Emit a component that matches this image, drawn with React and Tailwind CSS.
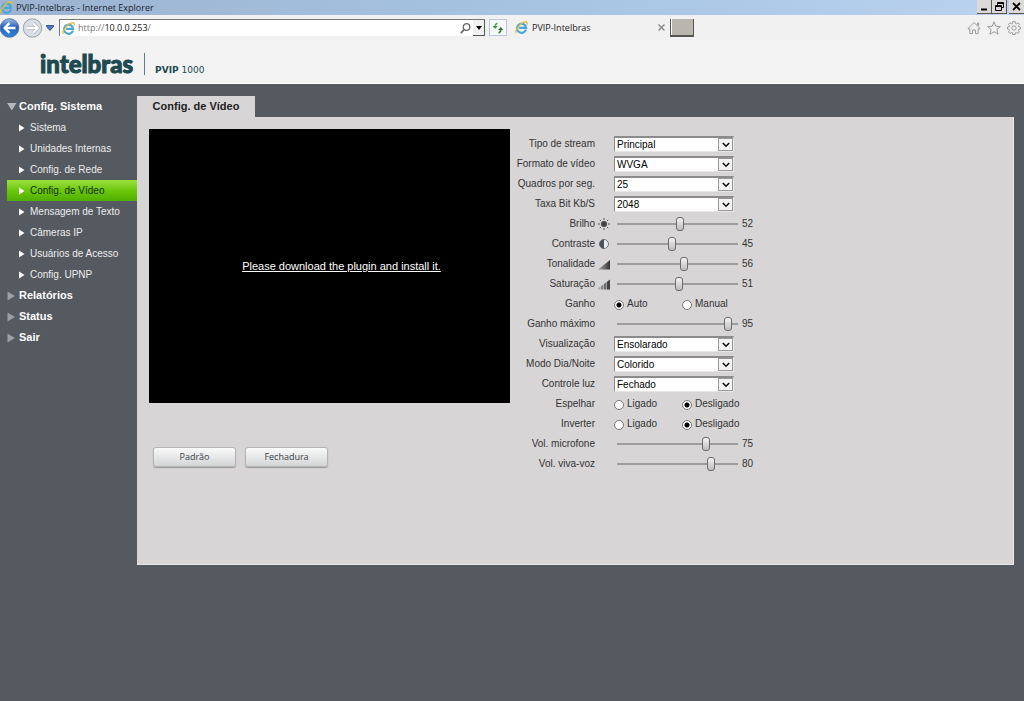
import { useState } from 'react';

const subItems = [
    'Sistema',
    'Unidades Internas',
    'Config. de Rede',
    'Config. de Vídeo',
    'Mensagem de Texto',
    'Câmeras IP',
    'Usuários de Acesso',
    'Config. UPNP',
];

function IeLogo() {
    return (
        <svg width="13" height="13" viewBox="0 0 14 14" fill="none" className="shrink-0">
            <path d="M11.8 9.3A4.9 4.9 0 1 1 12 7.4H4.5" stroke="#4ba6da" strokeWidth="2.3" />
            <path d="M1.4 12.8C-.6 10.8 6 1.400 11 .9c2-.2 2.400 1.300 1.600 3" stroke="#dcc03e" strokeWidth="1.500" />
        </svg>
    );
}

function TitleBar() {
    return (
        <div className="flex h-[15px] items-center justify-between bg-linear-to-r from-[#9cb3d1] via-[#a6c3e2] to-[#b9d2f0]">
            <div className="flex items-center gap-[3px] text-[9px] leading-[14px] text-[#1a2230]">
                <IeLogo />
                <span>PVIP-Intelbras - Internet Explorer</span>
            </div>
            <div className="flex h-[14px] self-start">
                <button aria-label="Minimizar" className="flex w-[15px] items-end justify-center border-r border-b border-[#555] bg-[#dcdad6] pb-[2px]">
                    <svg width="7" height="3"><path d="M0 1.500H6" stroke="#000" strokeWidth="2" /></svg>
                </button>
                <button aria-label="Restaurar" className="mr-[2px] flex w-[15px] items-center justify-center border-r border-b border-[#555] bg-[#dcdad6]">
                    <svg width="9" height="9" fill="none" stroke="#000">
                        <path d="M2.500 3V.5h6v5H7M2.500 1.500h6M.5 3.500h6v5h-6zM.5 4.500h6" />
                    </svg>
                </button>
                <button aria-label="Fechar" className="flex w-[15px] items-center justify-center border-b border-[#555] bg-[#dcdad6]">
                    <svg width="9" height="9"><path d="M1 1l7 7M8 1L1 8" stroke="#000" strokeWidth="1.800" /></svg>
                </button>
            </div>
        </div>
    );
}

function AddressBar() {
    return (
        <div className="flex h-[25px] items-center bg-[#f1f1f1]">
            <button aria-label="Voltar">
                <svg width="20" height="20" viewBox="0 0 20 20" className="block">
                    <defs>
                        <linearGradient id="back" x1="0" y1="0" x2="0" y2="1">
                            <stop offset="0" stopColor="#9dbdea" />
                            <stop offset=".45" stopColor="#2860b8" />
                            <stop offset="1" stopColor="#2b8be0" />
                        </linearGradient>
                    </defs>
                    <circle cx="9.500" cy="10" r="9.300" fill="url(#back)" stroke="#4b6288" strokeWidth=".8" />
                    <path d="M15.500 10H5M9.500 5.200L4.700 10l4.800 4.800" fill="none" stroke="#fff" strokeWidth="2.400" />
                </svg>
            </button>
            <button aria-label="Avançar" className="ml-[3px]">
                <svg width="20" height="20" viewBox="0 0 20 20" className="block">
                    <circle cx="9.500" cy="10" r="9.200" fill="#d9dee5" stroke="#8d97a5" strokeWidth=".9" />
                    <path d="M4 10h10.500M10 5.200l4.800 4.800-4.800 4.800" fill="none" stroke="#aab1ba" strokeWidth="3.200" />
                    <path d="M4 10h10.500M10 5.200l4.800 4.800-4.800 4.800" fill="none" stroke="#fff" strokeWidth="2" />
                </svg>
            </button>
            <button aria-label="Histórico" className="ml-[3px]">
                <svg width="8" height="6" className="block"><path d="M.5.5h7v1L4 5.500.5 1.500z" fill="#4a78c8" stroke="#23407c" strokeWidth=".8" /></svg>
            </button>
            <div className="ml-[5px] flex h-[17px] w-[426px] items-center border-t border-l border-[#777] bg-white pl-[2px]">
                <IeLogo />
                <span className="ml-[3px] flex-1 text-[9px] text-[#777]">
                    http://<span className="text-[#111]">10.0.0.253</span>/
                </span>
                <button aria-label="Pesquisar">
                    <svg width="11" height="11" fill="none" stroke="#666"><circle cx="6.500" cy="4" r="3.300" strokeWidth="1.300" /><path d="M4.200 6.500L.8 10.200" strokeWidth="1.800" /></svg>
                </button>
                <button aria-label="Opções de endereço" className="ml-[2px] flex h-full w-[12px] items-center justify-center border-r border-b border-[#555] bg-[#f1f1f1]">
                    <svg width="6" height="4"><path d="M0 0h6L3 4z" fill="#000" /></svg>
                </button>
            </div>
            <button aria-label="Atualizar" className="ml-[4px] flex h-[17px] w-[18px] items-center justify-center border border-[#b9c8de] bg-[#f7f9fb]">
                <svg width="12" height="12" fill="none">
                    <path d="M5.500 1.200Q3.300 1.500 3.300 4.500" stroke="#55a84c" strokeWidth="1.600" />
                    <path d="M.6 4h5.200L3.200 7z" fill="#3d9a3d" />
                    <path d="M6.500 10.800Q8.700 10.500 8.700 7.500" stroke="#2f7d33" strokeWidth="1.600" />
                    <path d="M6.200 8h5.200L8.800 5z" fill="#2a7230" />
                </svg>
            </button>
            <div className="ml-[8px] flex w-[150px] items-center gap-[4px] text-[9px] text-[#222]">
                <IeLogo />
                <span className="flex-1">PVIP-Intelbras</span>
                <button aria-label="Fechar guia">
                    <svg width="7" height="7" className="block"><path d="M.5.5l6 6M6.500.5l-6 6" stroke="#888" strokeWidth="1.400" /></svg>
                </button>
            </div>
            <button aria-label="Nova guia" className="ml-[5px] h-[18px] w-[24px] border-r border-b-2 border-l border-[#555] bg-[#bab6af] shadow-[inset_1px_0_0_#fff]"></button>
            <div className="ml-auto flex items-center gap-[6px] pr-[3px] text-[#9a9a9a]">
                <svg width="14" height="14" fill="none" stroke="currentColor"><path d="M1 7.500L7 1.500l6 6-1 .8-.8-.7v5H8.500V9h-3v3.600H2.800v-5L2 8.300zM10.500 4V2h1.200v3" /></svg>
                <svg width="14" height="14" fill="none" stroke="currentColor"><path d="M7 .8l1.800 4.400 4.700.3-3.600 3 1.200 4.700L7 10.700l-4.100 2.500 1.200-4.700-3.600-3 4.700-.3z" /></svg>
                <svg width="14" height="14" fill="none" stroke="currentColor">
                    <circle cx="7" cy="7" r="2.200" />
                    <path d="M5.800.6h2.400l.3 1.800 1 .4 1.500-1 1.500 1.600-1 1.500.4 1 1.600.3v1.900l-1.700.4-.4 1 1 1.500-1.500 1.500-1.500-1-1 .4-.3 1.600H5.800l-.3-1.600-1-.4-1.500 1L1.500 11l1-1.500-.4-1L.5 8.100V6.200l1.600-.3.4-1-1-1.500L3 1.800l1.500 1 1-.4z" />
                </svg>
            </div>
        </div>
    );
}

function Sidebar() {
    const [active, setActive] = useState('Config. de Vídeo');

    return (
        <nav className="w-[137px] shrink-0 pl-[7px] text-white">
            <a href="#sistema" className="flex h-[21px] items-center gap-[2px] text-[11px] font-bold">
                <svg width="10" height="8"><path d="M0 0h9.500L4.800 7.500z" fill="#b4b6b9" /></svg>
                Config. Sistema
            </a>
            <ul>
                {subItems.map((item) => (
                    <li key={item}>
                        <a
                            href="#item"
                            onClick={() => setActive(item)}
                            className={
                                item === active
                                    ? 'flex h-[21px] items-center gap-[5px] bg-linear-to-b from-[#9be03a] via-[#6cc80a] to-[#4fae00] pl-[12px] text-[10px] text-[#10300a]'
                                    : 'flex h-[21px] items-center gap-[5px] pl-[12px] text-[10px] text-[#eceded]'
                            }
                        >
                            <svg width="6" height="8"><path d="M0 .5L5.500 4 0 7.500z" fill="#fff" /></svg>
                            {item}
                        </a>
                    </li>
                ))}
            </ul>
            {['Relatórios', 'Status', 'Sair'].map((item) => (
                <a key={item} href="#menu" className="flex h-[21px] items-center gap-[4px] text-[11px] font-bold">
                    <svg width="8" height="10"><path d="M.5.5L8 5 .5 9.500z" fill="#9c9fa3" /></svg>
                    {item}
                </a>
            ))}
        </nav>
    );
}

function Row({ id, label, icon, children }) {
    return (
        <div className="flex h-[20px] items-center">
            <label htmlFor={id} className="w-[85px] text-right whitespace-nowrap">{label}</label>
            <span className="flex w-[19px] justify-center pr-[2px]">{icon}</span>
            {children}
        </div>
    );
}

function SelectRow({ id, label, value }) {
    return (
        <Row id={id} label={label}>
            <div className="relative h-[16px] w-[120px]">
                <select id={id} className="block h-full w-full appearance-none border border-t-2 border-[#8b8b8b] border-r-[#e6e6e6] border-b-[#e6e6e6] bg-white pl-[2px] text-[10px] leading-[12px] text-black">
                    <option>{value}</option>
                </select>
                <span className="pointer-events-none absolute top-[2px] right-[1px] bottom-[1px] flex w-[15px] items-center justify-center border border-[#999] bg-[#f3f3f3]">
                    <svg width="8" height="6" fill="none"><path d="M.8 1L4 4.200 7.200 1" stroke="#111" strokeWidth="1.600" /></svg>
                </span>
            </div>
        </Row>
    );
}

function SliderRow({ id, label, icon, initial }) {
    const [value, setValue] = useState(initial);

    return (
        <Row id={id} label={label} icon={icon}>
            <input
                id={id}
                type="range"
                min="0"
                max="100"
                value={value}
                onChange={(e) => setValue(Number(e.target.value))}
                className="ml-[3px] h-[14px] w-[121px] appearance-none bg-transparent [&::-webkit-slider-runnable-track]:h-[2px] [&::-webkit-slider-runnable-track]:bg-[#9c9c9c] [&::-webkit-slider-thumb]:mt-[-6px] [&::-webkit-slider-thumb]:h-[14px] [&::-webkit-slider-thumb]:w-[8px] [&::-webkit-slider-thumb]:appearance-none [&::-webkit-slider-thumb]:rounded-[3px] [&::-webkit-slider-thumb]:border [&::-webkit-slider-thumb]:border-[#6b6b6b] [&::-webkit-slider-thumb]:bg-linear-to-b [&::-webkit-slider-thumb]:from-[#f4f4f4] [&::-webkit-slider-thumb]:to-[#bdbdbd]"
            />
            <span className="ml-[4px]">{value}</span>
        </Row>
    );
}

function RadioRow({ name, label, options, initial }) {
    const [value, setValue] = useState(initial);

    return (
        <div role="radiogroup" aria-label={label} className="flex h-[20px] items-center">
            <span className="w-[85px] text-right">{label}</span>
            <div className="ml-[19px] flex">
                {options.map((option) => (
                    <label key={option} className="flex w-[68px] items-center gap-[3px]">
                        <input
                            type="radio"
                            name={name}
                            checked={value === option}
                            onChange={() => setValue(option)}
                            className="mt-[2px] h-[10px] w-[10px] shrink-0 appearance-none rounded-full border border-[#777] bg-white checked:bg-[radial-gradient(circle,#000_2px,#fff_3px)]"
                        />
                        {option}
                    </label>
                ))}
            </div>
        </div>
    );
}

const sunIcon = (
    <svg width="12" height="12" stroke="#555">
        <circle cx="6" cy="6" r="3" fill="#444" stroke="none" />
        <path d="M6 0v2M6 10v2M0 6h2M10 6h2M1.800 1.800l1.300 1.300M8.900 8.900l1.300 1.300M10.200 1.800L8.900 3.100M3.100 8.900l-1.300 1.300" />
    </svg>
);

const contrastIcon = (
    <svg width="12" height="12">
        <circle cx="6" cy="6" r="4.500" fill="#e8ecf0" stroke="#69727c" />
        <path d="M6 1.500a4.500 4.500 0 0 0 0 9z" fill="#4a525c" />
    </svg>
);

const hueIcon = (
    <svg width="12" height="12">
        <defs>
            <linearGradient id="hue">
                <stop offset="0" stopColor="#aaa" />
                <stop offset="1" stopColor="#333" />
            </linearGradient>
        </defs>
        <path d="M0 11.500L12 2v9.500z" fill="url(#hue)" />
    </svg>
);

const saturationIcon = (
    <svg width="12" height="12">
        <path d="M0 11.500V10l2.500-1.500v3z" fill="#aaa" />
        <path d="M3 11.500V8.300l2.500-2v5.200z" fill="#8a8a8a" />
        <path d="M6 11.500V6l2.500-2v7.500z" fill="#6c6c6c" />
        <path d="M9 11.500V3.800l3-2.300v10z" fill="#444" />
    </svg>
);

function VideoForm() {
    return (
        <form className="mt-[5px] text-[10px] leading-[14px] text-[#333]">
            <SelectRow id="stream" label="Tipo de stream" value="Principal" />
            <SelectRow id="formato" label="Formato de vídeo" value="WVGA" />
            <SelectRow id="quadros" label="Quadros por seg." value="25" />
            <SelectRow id="taxa" label="Taxa Bit Kb/S" value="2048" />
            <SliderRow id="brilho" label="Brilho" icon={sunIcon} initial={52} />
            <SliderRow id="contraste" label="Contraste" icon={contrastIcon} initial={45} />
            <SliderRow id="tonalidade" label="Tonalidade" icon={hueIcon} initial={56} />
            <SliderRow id="saturacao" label="Saturação" icon={saturationIcon} initial={51} />
            <RadioRow name="ganho" label="Ganho" options={['Auto', 'Manual']} initial="Auto" />
            <SliderRow id="ganhomax" label="Ganho máximo" initial={95} />
            <SelectRow id="visualizacao" label="Visualização" value="Ensolarado" />
            <SelectRow id="dianoite" label="Modo Dia/Noite" value="Colorido" />
            <SelectRow id="luz" label="Controle luz" value="Fechado" />
            <RadioRow name="espelhar" label="Espelhar" options={['Ligado', 'Desligado']} initial="Desligado" />
            <RadioRow name="inverter" label="Inverter" options={['Ligado', 'Desligado']} initial="Desligado" />
            <SliderRow id="microfone" label="Vol. microfone" initial={75} />
            <SliderRow id="vivavoz" label="Vol. viva-voz" initial={80} />
        </form>
    );
}

function ActionButton({ children }) {
    return (
        <button className="h-[20px] w-[83px] rounded-[3px] border border-[#b4b4b4] bg-linear-to-b from-[#fafafa] to-[#d3d5d6] font-['Open_Sans',sans-serif] text-[9px] leading-[18px] text-[#3a4248] shadow-[0_1px_1px_#999]">
            {children}
        </button>
    );
}

export default function App() {
    return (
        <div className="min-h-screen bg-[#555960] font-['Liberation_Sans',Arial,sans-serif]">
            <div className="font-['Open_Sans',sans-serif]">
                <TitleBar />
                <AddressBar />
            </div>

            {/* Brand header */}
            <header className="flex h-[44px] items-center border-b border-white bg-[#f3f3f3] pt-[4px] pl-[40px] text-[#1d4a50]">
                <span className="font-['Lato',sans-serif] text-[24px] leading-[28px] font-black [-webkit-text-stroke:1px_#1d4a50]">intelbras</span>
                <span className="ml-[11px] h-[22px] w-px bg-[#5d7f84]"></span>
                <span className="mt-[12px] ml-[10px] font-['DejaVu_Sans',sans-serif] text-[9px] leading-[12px]">
                    <b>PVIP</b> 1000
                </span>
            </header>

            <div className="flex pt-[12px] pr-[10px]">
                <Sidebar />
                <main className="min-w-0 flex-1">
                    <h1 className="flex h-[21px] w-[118px] items-center justify-center bg-[#d7d5d6] text-[11px] font-bold text-[#222]">
                        Config. de Vídeo
                    </h1>
                    <div className="flex border-r border-b border-[#e8e8e8] bg-[#d7d5d6] px-[12px] pt-[12px] pb-[90px]">
                        <div className="w-[361px] shrink-0">
                            <div className="flex h-[274px] items-center justify-center bg-black pl-[24px]">
                                <a href="#plugin" className="text-[11px] text-white underline">
                                    Please download the plugin and install it.
                                </a>
                            </div>
                            <div className="mt-[44px] flex gap-[9px] pl-[4px]">
                                <ActionButton>Padrão</ActionButton>
                                <ActionButton>Fechadura</ActionButton>
                            </div>
                        </div>
                        <VideoForm />
                    </div>
                </main>
            </div>
        </div>
    );
}
